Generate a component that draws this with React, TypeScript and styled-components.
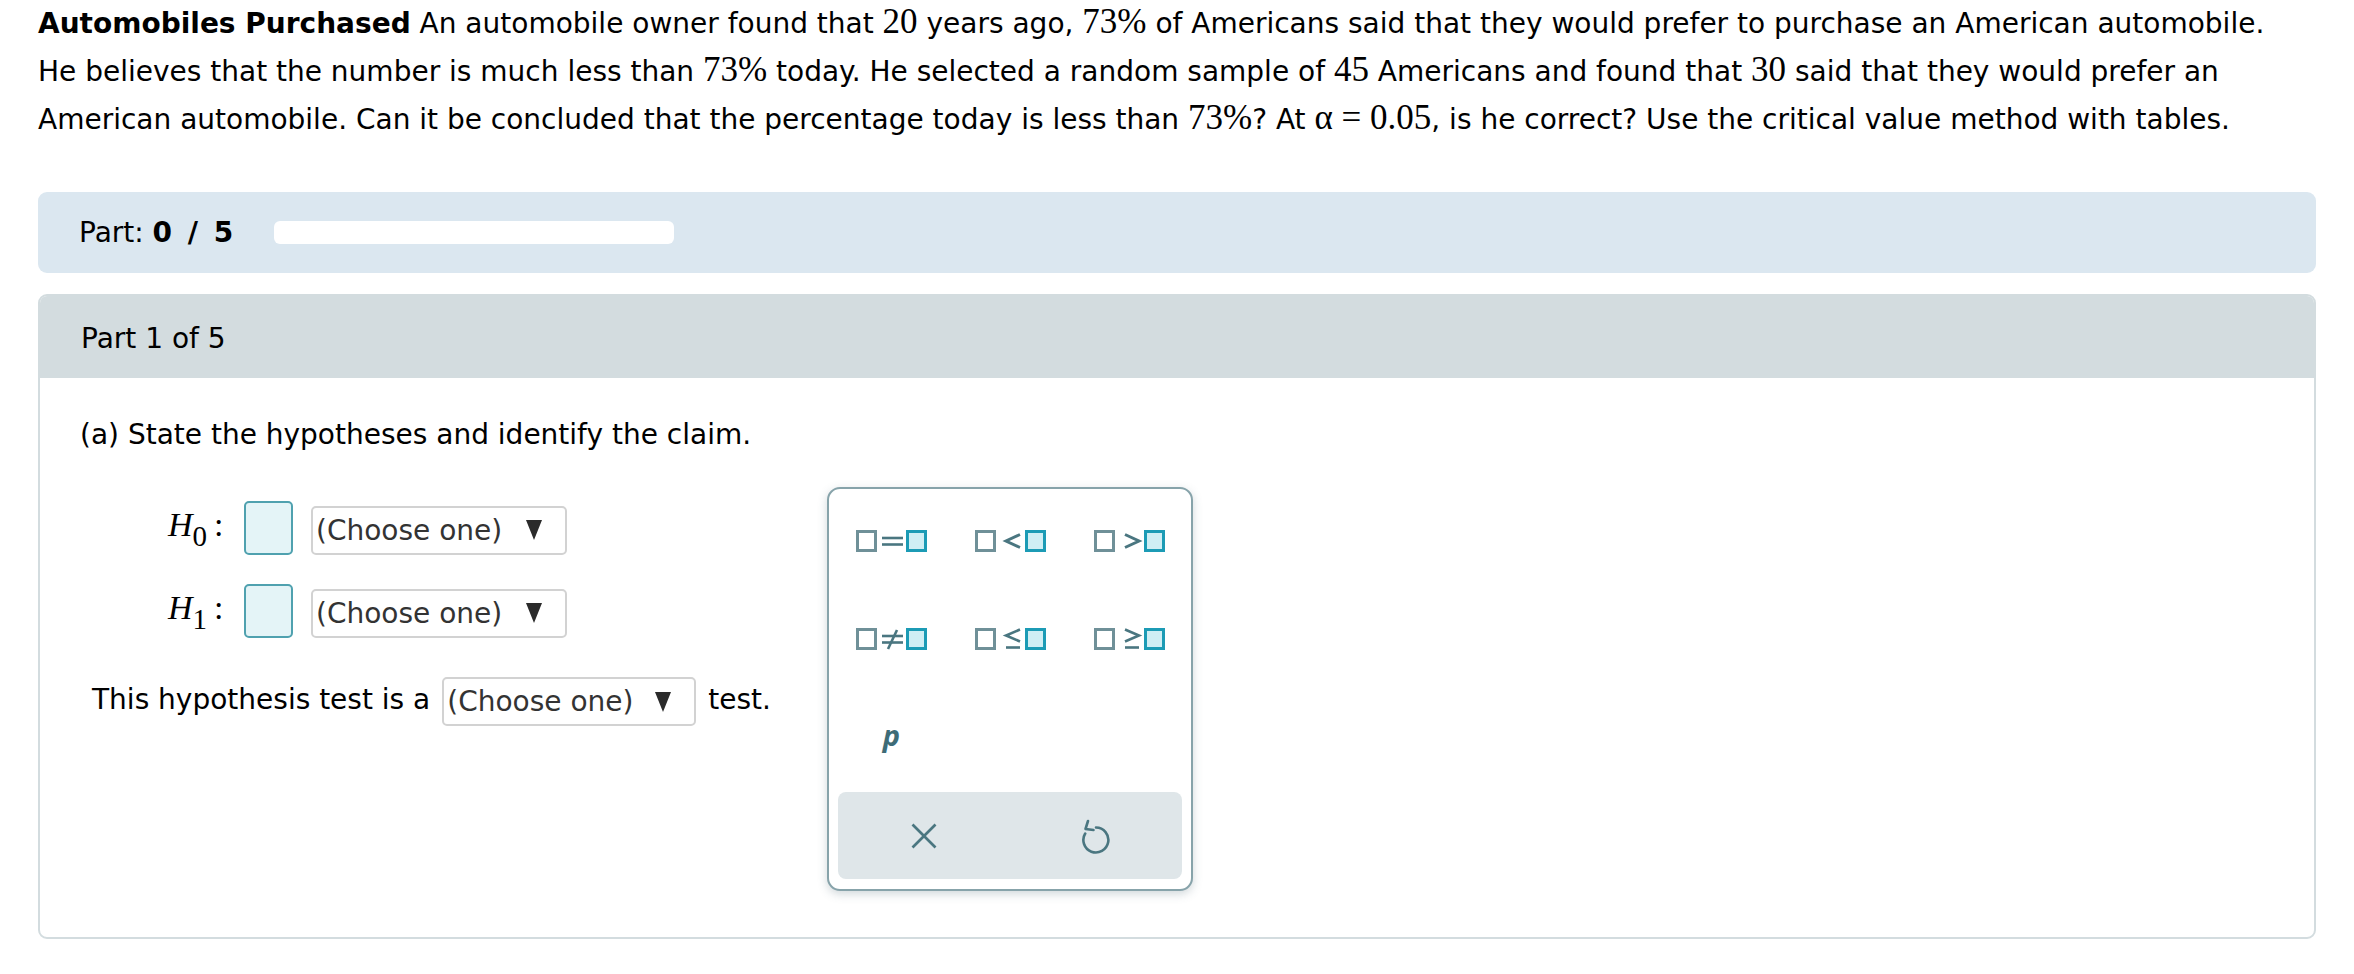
import React from "react";
import styled, { createGlobalStyle } from "styled-components";

const GlobalStyle = createGlobalStyle`
  html, body {
    margin: 0;
    padding: 0;
    background: #ffffff;
  }
  body {
    font-family: Verdana, "DejaVu Sans", sans-serif;
    font-size: 28px;
    color: #000;
  }
`;

const Page = styled.div`
  padding: 0 38px;
`;

const Problem = styled.p`
  margin: 0 0 48px 0;
  font-size: 28px;
  line-height: 48px;
  color: #000;
  white-space: nowrap;
`;

const Num = styled.span`
  font-family: "Liberation Serif", "DejaVu Serif", serif;
  font-size: 35px;
  line-height: 1;
`;

const ProgressBar = styled.div`
  display: flex;
  align-items: center;
  height: 81px;
  padding-left: 41px;
  background: #dbe7f0;
  border-radius: 9px;
  margin-bottom: 21px;
`;

const PartLabel = styled.span`
  font-size: 28px;
  margin-right: 41px;
  & b {
    font-weight: bold;
    word-spacing: 6px;
  }
`;

const Track = styled.div`
  width: 400px;
  height: 23px;
  border-radius: 6px;
  background: #ffffff;
`;

const Panel = styled.section`
  border: 2px solid #d3dcdf;
  border-radius: 9px;
`;

const PanelHeader = styled.div`
  display: flex;
  align-items: center;
  height: 82px;
  padding: 2px 0 0 41px;
  box-sizing: border-box;
  background: #d3dcdf;
  border-radius: 7px 7px 0 0;
  font-size: 28px;
`;

const PanelBody = styled.div`
  position: relative;
  height: 559px;
  padding: 39px 0 0 40px;
  box-sizing: border-box;
`;

const Question = styled.div`
  font-size: 28px;
  line-height: 36px;
  margin-bottom: 48px;
`;

const HypRow = styled.div<{ $gap: number }>`
  display: flex;
  align-items: center;
  margin-left: 88px;
  margin-bottom: ${(p) => p.$gap}px;
`;

const HLabel = styled.span`
  display: inline-block;
  white-space: nowrap;
  font-family: "Liberation Serif", "DejaVu Serif", serif;
  font-size: 34px;
  line-height: 40px;
  width: 76px;
  margin-top: -6px;
  & i {
    font-style: italic;
  }
  & sub {
    font-size: 29px;
    vertical-align: -10px;
    line-height: 0;
    margin-left: 0px;
  }
  & .colon {
    margin-left: 7px;
  }
`;

const AnswerBox = styled.div`
  width: 49px;
  height: 54px;
  box-sizing: border-box;
  border: 2px solid #4fa1af;
  border-radius: 5px;
  background: #e4f4f7;
  margin-right: 18px;
`;

const Select = styled.div<{ $w: number }>`
  display: inline-flex;
  align-items: center;
  justify-content: space-between;
  width: ${(p) => p.$w}px;
  height: 49px;
  box-sizing: border-box;
  border: 2px solid #d2d2d2;
  border-radius: 5px;
  background: #fff;
  padding: 0 23px 0 3px;
  color: #333;
  font-size: 28px;
  white-space: nowrap;
  margin-top: 4px;
`;

const Arrow = styled.span`
  width: 0;
  height: 0;
  border-left: 8px solid transparent;
  border-right: 8px solid transparent;
  border-top: 20px solid #2b2b2b;
`;

const TestRow = styled.div`
  display: flex;
  align-items: center;
  gap: 12px;
  margin-left: 12px;
  font-size: 28px;
`;

const Palette = styled.div`
  position: absolute;
  left: 787px;
  top: 109px;
  width: 366px;
  height: 404px;
  box-sizing: border-box;
  border: 2px solid #87a3aa;
  border-radius: 13px;
  background: #fff;
  box-shadow: 0 3px 10px rgba(70, 100, 110, 0.25);
  padding: 3px 9px 10px 3px;
  display: flex;
  flex-direction: column;
`;

const KeyGrid = styled.div`
  display: grid;
  grid-template-columns: repeat(3, 119px);
  grid-template-rows: repeat(3, 98px);
`;

const Key = styled.div`
  display: flex;
  align-items: center;
  justify-content: center;
`;

const PKey = styled.span`
  font-family: "Noto Sans", "DejaVu Sans", sans-serif;
  font-weight: bold;
  font-style: italic;
  font-size: 29px;
  color: #3e6c77;
  margin-top: -6px;
`;

const ActionBar = styled.div`
  margin: 6px 0 0 6px;
  height: 87px;
  border-radius: 8px;
  background: #dfe6e9;
  display: grid;
  grid-template-columns: 1fr 1fr;
  align-items: center;
  justify-items: center;
`;

const GRAY = "#6f9098";
const TEAL = "#1c9bb5";
const TEAL_FILL = "#cfeef4";
const SYM = "#4a7680";

type Op = "eq" | "lt" | "gt" | "ne" | "le" | "ge";

const OpIcon: React.FC<{ op: Op }> = ({ op }) => {
  const sym = () => {
    switch (op) {
      case "eq":
        return (
          <g stroke={SYM} strokeWidth={2.6}>
            <line x1={26} y1={8} x2={47} y2={8} />
            <line x1={26} y1={14.5} x2={47} y2={14.5} />
          </g>
        );
      case "ne":
        return (
          <g stroke={SYM} strokeWidth={2.6} fill="none">
            <line x1={26} y1={8} x2={47} y2={8} />
            <line x1={26} y1={14.5} x2={47} y2={14.5} />
            <line x1={41} y1={2} x2={32} y2={21} />
          </g>
        );
      case "lt":
        return <polyline points="45,4.5 31,11 45,17.5" stroke={SYM} strokeWidth={3} fill="none" />;
      case "gt":
        return <polyline points="31,4.5 45,11 31,17.5" stroke={SYM} strokeWidth={3} fill="none" />;
      case "le":
        return (
          <g stroke={SYM} strokeWidth={2.6} fill="none">
            <polyline points="45,1.5 31,7.5 45,13.5" />
            <line x1={31} y1={19.5} x2={45} y2={19.5} />
          </g>
        );
      case "ge":
        return (
          <g stroke={SYM} strokeWidth={2.6} fill="none">
            <polyline points="31,1.5 45,7.5 31,13.5" />
            <line x1={31} y1={19.5} x2={45} y2={19.5} />
          </g>
        );
    }
  };
  return (
    <svg width={72} height={22} viewBox="0 0 72 22">
      <rect x={1.5} y={1.5} width={18} height={19} fill="#fff" stroke={GRAY} strokeWidth={3} />
      {sym()}
      <rect x={51.5} y={1.5} width={18} height={19} fill={TEAL_FILL} stroke={TEAL} strokeWidth={3} />
    </svg>
  );
};

const CloseIcon = () => (
  <svg width={26} height={26} viewBox="0 0 26 26">
    <g stroke={SYM} strokeWidth={2.6} strokeLinecap="butt">
      <line x1={1.5} y1={1.5} x2={24.5} y2={24.5} />
      <line x1={24.5} y1={1.5} x2={1.5} y2={24.5} />
    </g>
  </svg>
);

const UndoIcon = () => (
  <svg width={30} height={36} viewBox="0 0 30 36">
    <g stroke={SYM} strokeWidth={2.6} fill="none" strokeLinecap="round" strokeLinejoin="round">
      <path d="M 15 9.5 A 12.5 12.5 0 1 1 4.2 15.5" />
      <polyline points="7,3 4.5,11 12.5,12" />
    </g>
  </svg>
);

const ops: Op[] = ["eq", "lt", "gt", "ne", "le", "ge"];

const SelectBox: React.FC<{ w: number }> = ({ w }) => (
  <Select $w={w}>
    <span>(Choose one)</span>
    <Arrow />
  </Select>
);

export default function App() {
  return (
    <>
      <GlobalStyle />
      <Page>
        <Problem>
          <b>Automobiles Purchased</b> An automobile owner found that <Num>20</Num> years ago,{" "}
          <Num>73%</Num> of Americans said that they would prefer to purchase an American automobile.
          <br />
          He believes that the number is much less than <Num>73%</Num> today. He selected a random sample of{" "}
          <Num>45</Num> Americans and found that <Num>30</Num> said that they would prefer an
          <br />
          American automobile. Can it be concluded that the percentage today is less than <Num>73%</Num>? At{" "}
          <Num>α = 0.05</Num>, is he correct? Use the critical value method with tables.
        </Problem>

        <ProgressBar>
          <PartLabel>
            Part: <b>0 / 5</b>
          </PartLabel>
          <Track />
        </ProgressBar>

        <Panel>
          <PanelHeader>Part 1 of 5</PanelHeader>
          <PanelBody>
            <Question>(a) State the hypotheses and identify the claim.</Question>

            <HypRow $gap={29}>
              <HLabel>
                <i>H</i>
                <sub>0</sub>
                <span className="colon">:</span>
              </HLabel>
              <AnswerBox />
              <SelectBox w={256} />
            </HypRow>

            <HypRow $gap={35}>
              <HLabel>
                <i>H</i>
                <sub>1</sub>
                <span className="colon">:</span>
              </HLabel>
              <AnswerBox />
              <SelectBox w={256} />
            </HypRow>

            <TestRow>
              <span>This hypothesis test is a</span>
              <SelectBox w={254} />
              <span>test.</span>
            </TestRow>

            <Palette>
              <KeyGrid>
                {ops.map((op) => (
                  <Key key={op}>
                    <OpIcon op={op} />
                  </Key>
                ))}
                <Key>
                  <PKey>p</PKey>
                </Key>
              </KeyGrid>
              <ActionBar>
                <CloseIcon />
                <UndoIcon />
              </ActionBar>
            </Palette>
          </PanelBody>
        </Panel>
      </Page>
    </>
  );
}
